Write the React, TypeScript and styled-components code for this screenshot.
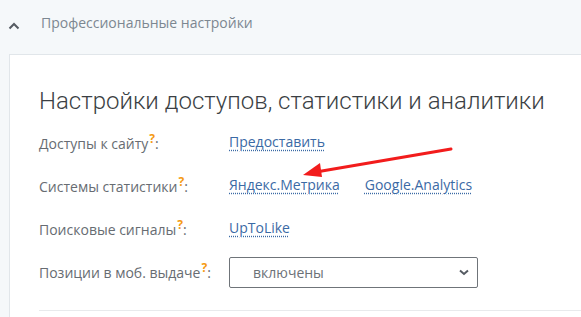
import styled, { createGlobalStyle } from "styled-components";

const GlobalStyle = createGlobalStyle`
  html, body {
    margin: 0;
    padding: 0;
    background: #f5f8fa;
    overflow: hidden;
  }
  body {
    font-family: "Open Sans", "Noto Sans", sans-serif;
  }
`;

const StyledPage = styled.div`
  width: 581px;
  height: 317px;
  position: relative;
  overflow: hidden;
`;

const StyledHeader = styled.div`
  display: flex;
  align-items: center;
  height: 54px;
  padding-left: 8px;
  box-sizing: border-box;
`;

const StyledToggle = styled.span`
  display: flex;
  width: 14px;
  margin-top: -3px;
  color: #555b62;
`;

const StyledHeaderTitle = styled.span`
  margin-left: 19px;
  margin-top: -10px;
  font-size: 14px;
  color: #7c8791;
`;

const StyledPanel = styled.section`
  margin-left: 9px;
  background: #fff;
  border-top: 1px solid #e1e6ea;
  border-left: 1px solid #e1e6ea;
  padding: 30px 0 0 29px;
  height: 300px;
`;

const StyledHeading = styled.h2`
  margin: 0 0 3px;
  font-family: Roboto, "Noto Sans", sans-serif;
  font-weight: 300;
  font-size: 24px;
  line-height: 32px;
  color: #3b3f44;
`;

const StyledRow = styled.div`
  display: flex;
  align-items: center;
  height: 43px;
`;

const StyledLabel = styled.div`
  width: 190px;
  font-size: 14px;
  color: #676c72;

  sup {
    color: #f59a12;
    font-weight: 700;
    font-size: 12px;
    margin-left: 1px;
  }
`;

const StyledLinks = styled.div`
  display: flex;
  gap: 25px;
`;

const StyledLink = styled.a`
  font-size: 14px;
  color: #3b6aa5;
  text-decoration: underline dotted #3b6aa5;
  text-underline-offset: 3px;
  cursor: pointer;
`;

const StyledSelect = styled.div`
  display: flex;
  align-items: center;
  justify-content: space-between;
  width: 249px;
  height: 31px;
  box-sizing: border-box;
  border: 1px solid #6f7479;
  border-radius: 2px;
  padding: 0 8px 0 23px;
  margin-top: 4px;
  font-size: 14px;
  color: #6c7177;
`;

const StyledDivider = styled.hr`
  margin: 18px 0 0;
  border: none;
  border-top: 1px solid #e8eaec;
`;

const StyledArrow = styled.svg`
  position: absolute;
  left: 300px;
  top: 143px;
`;

type Row = { label: string; links?: string[] };

const rows: Row[] = [
  { label: "Доступы к сайту", links: ["Предоставить"] },
  { label: "Системы статистики", links: ["Яндекс.Метрика", "Google.Analytics"] },
  { label: "Поисковые сигналы", links: ["UpToLike"] },
  { label: "Позиции в моб. выдаче" },
];

function App() {
  return (
    <StyledPage>
      <GlobalStyle />
      <StyledHeader>
        <StyledToggle>
          <svg width="12" height="8" viewBox="0 0 12 8">
            <path d="M1.5 6.5 L6 2 L10.5 6.5" fill="none" stroke="currentColor" strokeWidth="2" />
          </svg>
        </StyledToggle>
        <StyledHeaderTitle>Профессиональные настройки</StyledHeaderTitle>
      </StyledHeader>
      <StyledPanel>
        <StyledHeading>Настройки доступов, статистики и аналитики</StyledHeading>
        {rows.map((row) => (
          <StyledRow key={row.label}>
            <StyledLabel>
              {row.label}
              <sup>?</sup>:
            </StyledLabel>
            {row.links ? (
              <StyledLinks>
                {row.links.map((link) => (
                  <StyledLink key={link}>{link}</StyledLink>
                ))}
              </StyledLinks>
            ) : (
              <StyledSelect>
                <span>включены</span>
                <svg width="10" height="7" viewBox="0 0 10 7">
                  <path d="M1 1.5 L5 5 L9 1.5" fill="none" stroke="#555b62" strokeWidth="2" />
                </svg>
              </StyledSelect>
            )}
          </StyledRow>
        ))}
        <StyledDivider />
      </StyledPanel>
      <StyledArrow width="160" height="40" viewBox="0 0 160 40">
        <path d="M151 6 L16 29" stroke="#f21c1c" strokeWidth="3" strokeLinecap="round" />
        <path d="M3 32 L20 20 L22 34 Z" fill="#f21c1c" />
      </StyledArrow>
    </StyledPage>
  );
}

export default App;
